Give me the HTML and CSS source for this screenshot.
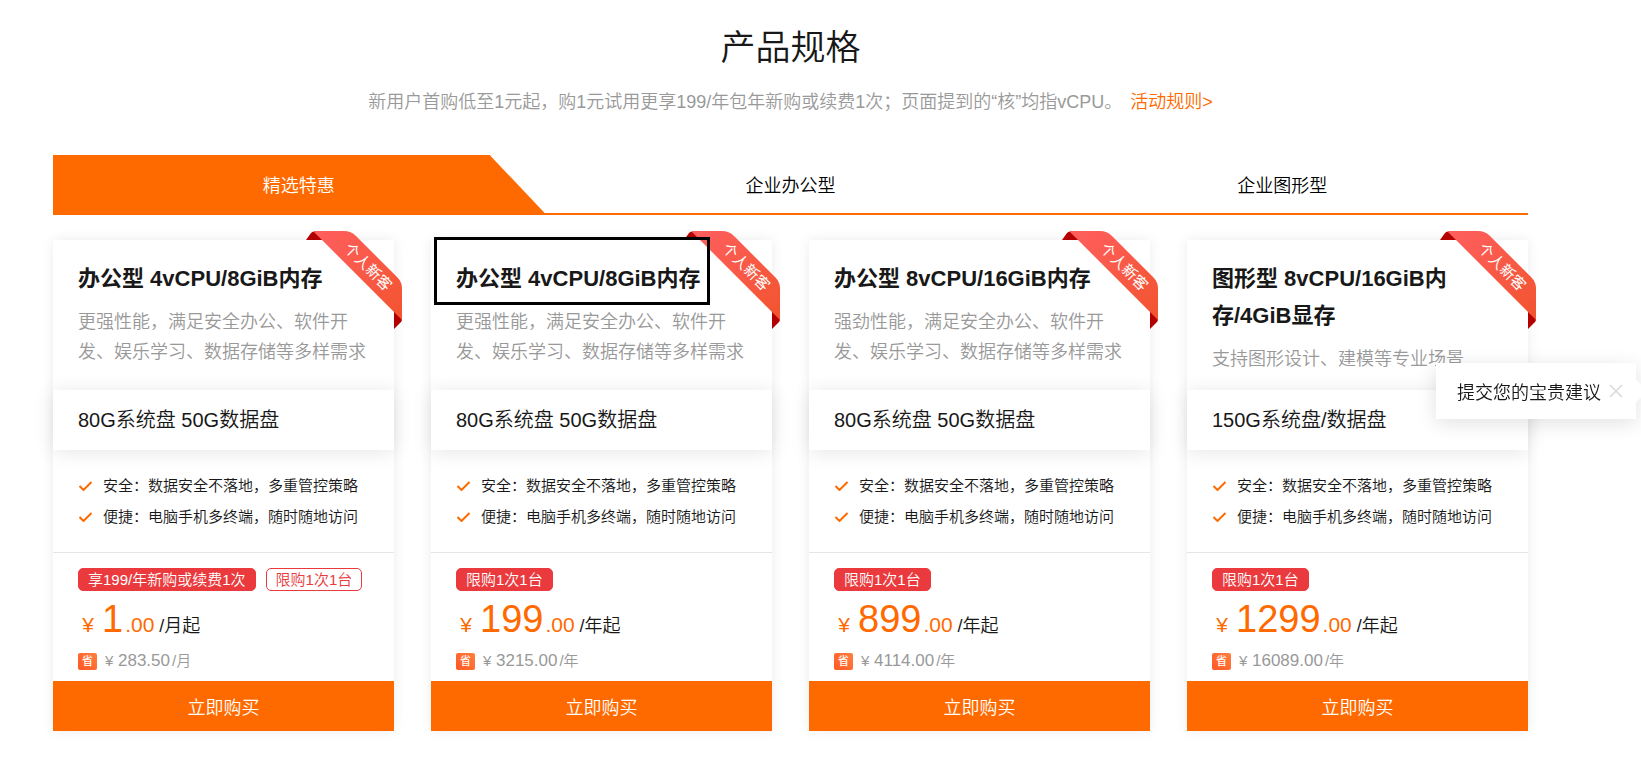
FILE: index.html
```html
<!DOCTYPE html>
<html lang="zh-CN">
<head>
<meta charset="utf-8">
<meta name="viewport" content="width=device-width, initial-scale=1">
<title>产品规格</title>
<link rel="stylesheet" href="styles.css">
</head>
<body>
<svg class="sprite" aria-hidden="true">
  <defs>
    <linearGradient id="ribbon-fill" x1="0" y1="0" x2="1" y2="1">
      <stop offset="0" stop-color="#ff5f5f"/>
      <stop offset="1" stop-color="#f2542f"/>
    </linearGradient>
    <symbol id="ribbon" viewBox="0 0 96 98">
      <path fill="#b30000" d="M0 9L5 2Q7 0 9 1L17 9Z"/>
      <path fill="#b30000" d="M88 80V98L95 91Q96 90 96 87Z"/>
      <path fill="url(#ribbon-fill)" d="M7 0H38Q45 0 50 5L91 46Q96 51 96 57V89Z"/>
    </symbol>
    <symbol id="check" viewBox="0 0 14 10">
      <path d="M1 5L5 9L13 1" fill="none" stroke="#ff6a00" stroke-width="2"/>
    </symbol>
  </defs>
</svg>
<main class="page">
  <header class="intro">
    <h1 class="intro-title">产品规格</h1>
    <p class="intro-text">新用户首购低至1元起，购1元试用更享199/年包年新购或续费1次；页面提到的“核”均指vCPU。<a class="intro-link" href="#rules">活动规则&gt;</a></p>
  </header>
  <nav class="tabs">
    <button class="tab tab-active" type="button">精选特惠</button>
    <button class="tab" type="button">企业办公型</button>
    <button class="tab" type="button">企业图形型</button>
  </nav>
  <section class="cards">
    <article class="card">
      <div class="ribbon"><svg class="ribbon-shape"><use href="#ribbon"/></svg><span class="ribbon-text">个人新客</span></div>
      <div class="card-head">
        <h2 class="card-title">办公型 4vCPU/8GiB内存</h2>
        <p class="card-desc">更强性能，满足安全办公、软件开发、娱乐学习、数据存储等多样需求</p>
      </div>
      <p class="disk">80G系统盘 50G数据盘</p>
      <ul class="features">
        <li class="feature"><svg class="check"><use href="#check"/></svg>安全：数据安全不落地，多重管控策略</li>
        <li class="feature"><svg class="check"><use href="#check"/></svg>便捷：电脑手机多终端，随时随地访问</li>
      </ul>
      <div class="offer">
        <div class="tags"><span class="tag">享199/年新购或续费1次</span><span class="tag tag-outline">限购1次1台</span></div>
        <p class="price"><span class="yen">¥</span><span class="whole">1</span><span class="cents">.00</span><span class="unit">/月起</span></p>
        <p class="saving"><span class="saving-badge">省</span><span class="saving-yen">¥</span>283.50<span class="saving-unit">/月</span></p>
      </div>
      <button class="buy" type="button">立即购买</button>
    </article>
    <article class="card">
      <div class="ribbon"><svg class="ribbon-shape"><use href="#ribbon"/></svg><span class="ribbon-text">个人新客</span></div>
      <div class="marker"></div>
      <div class="card-head">
        <h2 class="card-title">办公型 4vCPU/8GiB内存</h2>
        <p class="card-desc">更强性能，满足安全办公、软件开发、娱乐学习、数据存储等多样需求</p>
      </div>
      <p class="disk">80G系统盘 50G数据盘</p>
      <ul class="features">
        <li class="feature"><svg class="check"><use href="#check"/></svg>安全：数据安全不落地，多重管控策略</li>
        <li class="feature"><svg class="check"><use href="#check"/></svg>便捷：电脑手机多终端，随时随地访问</li>
      </ul>
      <div class="offer">
        <div class="tags"><span class="tag">限购1次1台</span></div>
        <p class="price"><span class="yen">¥</span><span class="whole">199</span><span class="cents">.00</span><span class="unit">/年起</span></p>
        <p class="saving"><span class="saving-badge">省</span><span class="saving-yen">¥</span>3215.00<span class="saving-unit">/年</span></p>
      </div>
      <button class="buy" type="button">立即购买</button>
    </article>
    <article class="card">
      <div class="ribbon"><svg class="ribbon-shape"><use href="#ribbon"/></svg><span class="ribbon-text">个人新客</span></div>
      <div class="card-head">
        <h2 class="card-title">办公型 8vCPU/16GiB内存</h2>
        <p class="card-desc">强劲性能，满足安全办公、软件开发、娱乐学习、数据存储等多样需求</p>
      </div>
      <p class="disk">80G系统盘 50G数据盘</p>
      <ul class="features">
        <li class="feature"><svg class="check"><use href="#check"/></svg>安全：数据安全不落地，多重管控策略</li>
        <li class="feature"><svg class="check"><use href="#check"/></svg>便捷：电脑手机多终端，随时随地访问</li>
      </ul>
      <div class="offer">
        <div class="tags"><span class="tag">限购1次1台</span></div>
        <p class="price"><span class="yen">¥</span><span class="whole">899</span><span class="cents">.00</span><span class="unit">/年起</span></p>
        <p class="saving"><span class="saving-badge">省</span><span class="saving-yen">¥</span>4114.00<span class="saving-unit">/年</span></p>
      </div>
      <button class="buy" type="button">立即购买</button>
    </article>
    <article class="card">
      <div class="ribbon"><svg class="ribbon-shape"><use href="#ribbon"/></svg><span class="ribbon-text">个人新客</span></div>
      <div class="card-head">
        <h2 class="card-title">图形型 8vCPU/16GiB内存/4GiB显存</h2>
        <p class="card-desc">支持图形设计、建模等专业场景</p>
      </div>
      <p class="disk">150G系统盘/数据盘</p>
      <ul class="features">
        <li class="feature"><svg class="check"><use href="#check"/></svg>安全：数据安全不落地，多重管控策略</li>
        <li class="feature"><svg class="check"><use href="#check"/></svg>便捷：电脑手机多终端，随时随地访问</li>
      </ul>
      <div class="offer">
        <div class="tags"><span class="tag">限购1次1台</span></div>
        <p class="price"><span class="yen">¥</span><span class="whole">1299</span><span class="cents">.00</span><span class="unit">/年起</span></p>
        <p class="saving"><span class="saving-badge">省</span><span class="saving-yen">¥</span>16089.00<span class="saving-unit">/年</span></p>
      </div>
      <button class="buy" type="button">立即购买</button>
    </article>
  </section>
</main>
<aside class="feedback">
  <span>提交您的宝贵建议</span>
  <button class="feedback-close" type="button" aria-label="关闭"><svg class="close-icon" viewBox="0 0 14 14"><path d="M1 1L13 13M13 1L1 13" fill="none" stroke="#d9d9d9" stroke-width="1.5"/></svg></button>
</aside>
</body>
</html>
```

FILE: styles.css
```css
* {
  box-sizing: border-box;
}

body {
  margin: 0;
  overflow-x: hidden;
  background: #fff;
  color: #181818;
  font-family: "Liberation Sans", "Noto Sans CJK SC", sans-serif;
  font-size: 18px;
  font-weight: 350;
}

h1, h2, p, ul {
  margin: 0;
  padding: 0;
}

button {
  margin: 0;
  padding: 0;
  border: 0;
  background: none;
  color: inherit;
  font: inherit;
  cursor: pointer;
}

.sprite {
  position: absolute;
  width: 0;
  height: 0;
}

.page {
  padding: 22px 113px 27px 53px;
}

.intro {
  text-align: center;
}

.intro-title {
  font-size: 35px;
  font-weight: 350;
  line-height: 52px;
}

.intro-text {
  margin: 13px 0 38px;
  color: #999;
  line-height: 30px;
}

.intro-link {
  margin-left: 8px;
  color: #ff6a00;
  text-decoration: none;
}

.tabs {
  display: grid;
  grid-template-columns: repeat(3, 1fr);
  border-bottom: 2px solid #ff6a00;
}

.tab {
  height: 58px;
  color: #000;
}

.tab-active {
  background: #ff6a00;
  color: #fff;
  clip-path: polygon(0 0, calc(100% - 55px) 0, 100% 100%, 0 100%);
}

.cards {
  display: grid;
  grid-template-columns: repeat(4, 1fr);
  gap: 37px;
  margin-top: 25px;
}

.card {
  position: relative;
  display: flex;
  flex-direction: column;
  background: #fff;
  box-shadow: 0 0 12px rgba(0, 0, 0, 0.08);
}

.ribbon {
  position: absolute;
  top: -9px;
  right: -8px;
  width: 96px;
  height: 98px;
}

.ribbon-shape {
  display: block;
  width: 100%;
  height: 100%;
}

.ribbon-text {
  position: absolute;
  top: 26px;
  left: 31px;
  width: 62px;
  color: #fff;
  font-size: 15px;
  font-weight: 400;
  line-height: 20px;
  text-align: center;
  white-space: nowrap;
  transform: rotate(45deg);
}

.marker {
  position: absolute;
  top: -3px;
  left: 3px;
  width: 276px;
  height: 68px;
  border: 3px solid #000;
}

.card-head {
  min-height: 150px;
  padding: 20px 25px 0;
}

.card-title {
  font-size: 22px;
  font-weight: 700;
  line-height: 37px;
}

.card-desc {
  margin-top: 10px;
  color: #999;
  line-height: 30px;
}

.disk {
  padding: 0 25px;
  background: #fff;
  box-shadow: 0 2px 20px rgba(0, 0, 0, 0.1);
  font-size: 20px;
  line-height: 60px;
}

.features {
  padding: 20px 25px;
  border-bottom: 1px solid #e5e5e5;
  list-style: none;
}

.feature {
  display: flex;
  align-items: center;
  gap: 10px;
  font-size: 15px;
  line-height: 31px;
  white-space: nowrap;
}

.check {
  width: 15px;
  height: 10px;
}

.offer {
  padding: 15px 25px 9px;
}

.tags {
  display: flex;
  gap: 10px;
}

.tag {
  padding: 0 9px;
  border: 1px solid #ea3a3d;
  border-radius: 5px;
  background: #ea3a3d;
  color: #fff;
  font-size: 15px;
  line-height: 21px;
  white-space: nowrap;
}

.tag-outline {
  background: #fff;
  color: #ea3a3d;
}

.price {
  display: flex;
  align-items: baseline;
  margin-top: 3px;
  color: #ff6a00;
  line-height: 20px;
}

.yen {
  width: 20px;
  margin-right: 4px;
  font-size: 21px;
  text-align: center;
}

.whole {
  font-size: 38px;
  line-height: 50px;
}

.cents {
  margin-left: 2px;
  font-size: 21px;
}

.unit {
  margin-left: 5px;
  color: #181818;
}

.saving {
  display: flex;
  align-items: center;
  margin-top: 6px;
  color: #999;
  font-size: 17px;
  line-height: 22px;
}

.saving-badge {
  width: 19px;
  margin-right: 8px;
  border-radius: 2px;
  background: linear-gradient(45deg, #ff5722, #ff8040);
  color: #fff;
  font-size: 11px;
  font-weight: 500;
  line-height: 17px;
  text-align: center;
}

.saving-yen {
  width: 13px;
  font-size: 15px;
}

.saving-unit {
  margin-left: 2px;
  font-size: 15px;
}

.buy {
  height: 50px;
  background: #ff6a00;
  color: #fff;
}

.feedback {
  position: fixed;
  top: 363px;
  right: 5px;
  display: flex;
  align-items: center;
  gap: 8px;
  height: 56px;
  padding: 0 13px 0 21px;
  background: #fff;
  box-shadow: 0 4px 20px rgba(0, 0, 0, 0.12);
}

.feedback::after {
  content: "";
  position: absolute;
  top: 20px;
  right: -8px;
  width: 16px;
  height: 16px;
  background: #fff;
  transform: rotate(45deg);
}

.feedback-close {
  display: flex;
}

.close-icon {
  width: 14px;
  height: 14px;
}
```
